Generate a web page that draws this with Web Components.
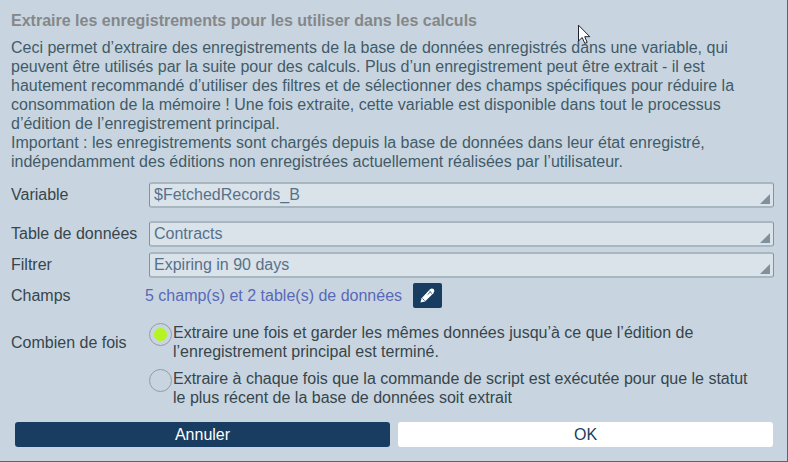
<!DOCTYPE html>
<html lang="fr">
<head>
<meta charset="utf-8">
<title>Extraire les enregistrements</title>
<style>
  html { background: #c8d5e0; }
  body {
    margin: 0; min-height: 100vh; box-sizing: border-box;
    border-right: 1px solid #5f666b; border-bottom: 1px solid #5f666b;
    font: 16px/19px "Liberation Sans", Arial, sans-serif; color: #37454c;
  }
</style>
</head>
<body>
<record-dialog>
  <span slot="title">Extraire les enregistrements pour les utiliser dans les calculs</span>
  <p slot="intro">Ceci permet d’extraire des enregistrements de la base de données enregistrés dans une variable, qui peuvent être utilisés par la suite pour des calculs. Plus d’un enregistrement peut être extrait - il est hautement recommandé d’utiliser des filtres et de sélectionner des champs spécifiques pour réduire la consommation de la mémoire ! Une fois extraite, cette variable est disponible dans tout le processus d’édition de l’enregistrement principal.<br>Important : les enregistrements sont chargés depuis la base de données dans leur état enregistré, indépendamment des éditions non enregistrées actuellement réalisées par l’utilisateur.</p>
  <select-row class="apart" label="Variable" value="$FetchedRecords_B"></select-row>
  <select-row label="Table de données" value="Contracts"></select-row>
  <select-row label="Filtrer" value="Expiring in 90 days"></select-row>
  <link-row label="Champs"><span>5 champ(s) et 2 table(s) de données</span></link-row>
  <radio-choice label="Combien de fois">
    <span slot="once">Extraire une fois et garder les mêmes données jusqu’à ce que l’édition de l’enregistrement principal est terminé.</span>
    <span slot="each">Extraire à chaque fois que la commande de script est exécutée pour que le statut le plus récent de la base de données soit extrait</span>
  </radio-choice>
  <action-button slot="actions" variant="dark">Annuler</action-button>
  <action-button slot="actions">OK</action-button>
</record-dialog>
<mouse-pointer></mouse-pointer>

<script>
class BaseElement extends HTMLElement {
  connectedCallback() {
    if (this.shadowRoot) return;
    this.attachShadow({ mode: 'open' }).innerHTML = this.render();
    this.ready();
  }
  ready() {}
}

customElements.define('record-dialog', class extends BaseElement {
  render() {
    return `<style>
      :host { display: block; padding: 11px 13px 14px 11px; }
      h1 { margin: 0 0 8px; font-size: 16px; line-height: 19px; font-weight: bold; color: #858789; }
      ::slotted(p) { margin: 0; color: #425b68; }
      .rows { display: flex; flex-direction: column; gap: 5px; margin-top: 11px; }
      ::slotted(.apart) { margin-bottom: 8px; }
      footer { display: flex; gap: 8px; margin: 15px 1px 0 4px; }
    </style>
    <h1><slot name="title"></slot></h1>
    <slot name="intro"></slot>
    <div class="rows"><slot></slot></div>
    <footer><slot name="actions"></slot></footer>`;
  }
});

customElements.define('select-row', class extends BaseElement {
  render() {
    return `<style>
      :host { display: grid; grid-template-columns: 134px 1fr; align-items: center; }
      label { padding-bottom: 2px; }
      .field { position: relative; margin-left: 4px; }
      select {
        display: block; appearance: none; box-sizing: border-box; width: 100%; height: 26px;
        margin: 0; padding: 0 20px 2px 4px; border: solid; border-width: 2px 1px; border-color: #a8b6bf #82939d;
        border-radius: 3px; background: #dae3e9; color: #56718c; font: inherit;
      }
      .field::after {
        content: ""; position: absolute; right: 4px; bottom: 4px; width: 10px; height: 10px;
        background: #80919d; clip-path: polygon(100% 0, 100% 100%, 0 100%); pointer-events: none;
      }
    </style>
    <label for="s"></label>
    <div class="field"><select id="s"><option></option></select></div>`;
  }
  ready() {
    this.shadowRoot.querySelector('label').textContent = this.getAttribute('label');
    this.shadowRoot.querySelector('option').textContent = this.getAttribute('value');
  }
});

customElements.define('link-row', class extends BaseElement {
  render() {
    return `<style>
      :host { display: grid; grid-template-columns: 134px 1fr; align-items: center; }
      .value { display: flex; align-items: center; gap: 11px; }
      a { color: #5a68b8; text-decoration: none; }
      button {
        display: grid; place-items: center; width: 29px; height: 25px; padding: 0;
        border: 0; border-radius: 2px; background: #183d61;
      }
      svg { display: block; }
    </style>
    <span>${this.getAttribute('label')}</span>
    <div class="value">
      <a href="#"><slot></slot></a>
      <button type="button" aria-label="Modifier">
        <svg width="17" height="17" viewBox="0 0 17 17" fill="#fff">
          <path d="M1.4 15.6 2.6 11.2 10.8 2.6Q12.8.6 14.8 2.2 16.4 4.2 14.4 6.2L6 14.4Z"/>
          <path d="M10.4 4 13 6.6M8.6 7.6 11.6 4.8M3.4 11.4 5.6 13.6" stroke="#183d61" stroke-width=".8" fill="none"/>
        </svg>
      </button>
    </div>`;
  }
});

customElements.define('radio-choice', class extends BaseElement {
  render() {
    return `<style>
      :host { display: block; margin-top: 10px; }
      fieldset { display: grid; grid-template-columns: 134px 1fr; row-gap: 8px; margin: 0; padding: 0; border: 0; min-width: 0; }
      .name { align-self: center; }
      .option { grid-column: 2; display: flex; align-items: flex-start; gap: 1px; padding: 0 12px 0 4px; }
      input {
        appearance: none; flex: none; box-sizing: border-box; width: 23px; height: 23px; margin: 0;
        border: 1px solid #929ca3; border-radius: 50%;
      }
      input:checked { background: radial-gradient(circle, #b5f422 6px, transparent 7px); }
    </style>
    <fieldset aria-labelledby="n">
      <span class="name" id="n">${this.getAttribute('label')}</span>
      <div class="option"><input type="radio" name="when" id="once" checked><label for="once"><slot name="once"></slot></label></div>
      <div class="option"><input type="radio" name="when" id="each"><label for="each"><slot name="each"></slot></label></div>
    </fieldset>`;
  }
});

customElements.define('action-button', class extends BaseElement {
  render() {
    return `<style>
      :host { display: block; flex: 1; }
      button {
        display: block; width: 100%; height: 25px; padding: 0; border: 0; border-radius: 3px;
        background: #fff; color: #183d61; font: inherit;
      }
      :host([variant="dark"]) button { background: #183d61; color: #fff; }
    </style>
    <button type="button"><slot></slot></button>`;
  }
});

customElements.define('mouse-pointer', class extends BaseElement {
  render() {
    return `<style>
      :host { position: absolute; left: 578px; top: 24px; pointer-events: none; }
      svg { display: block; }
    </style>
    <svg width="13" height="21" viewBox="0 0 13 21">
      <path d="M.5 1.2V17L4.2 13.5 6.8 19.4 9.2 18.4 6.7 12.7H11.8Z" fill="#fff" stroke="#1c2230"/>
    </svg>`;
  }
});
</script>
</body>
</html>
